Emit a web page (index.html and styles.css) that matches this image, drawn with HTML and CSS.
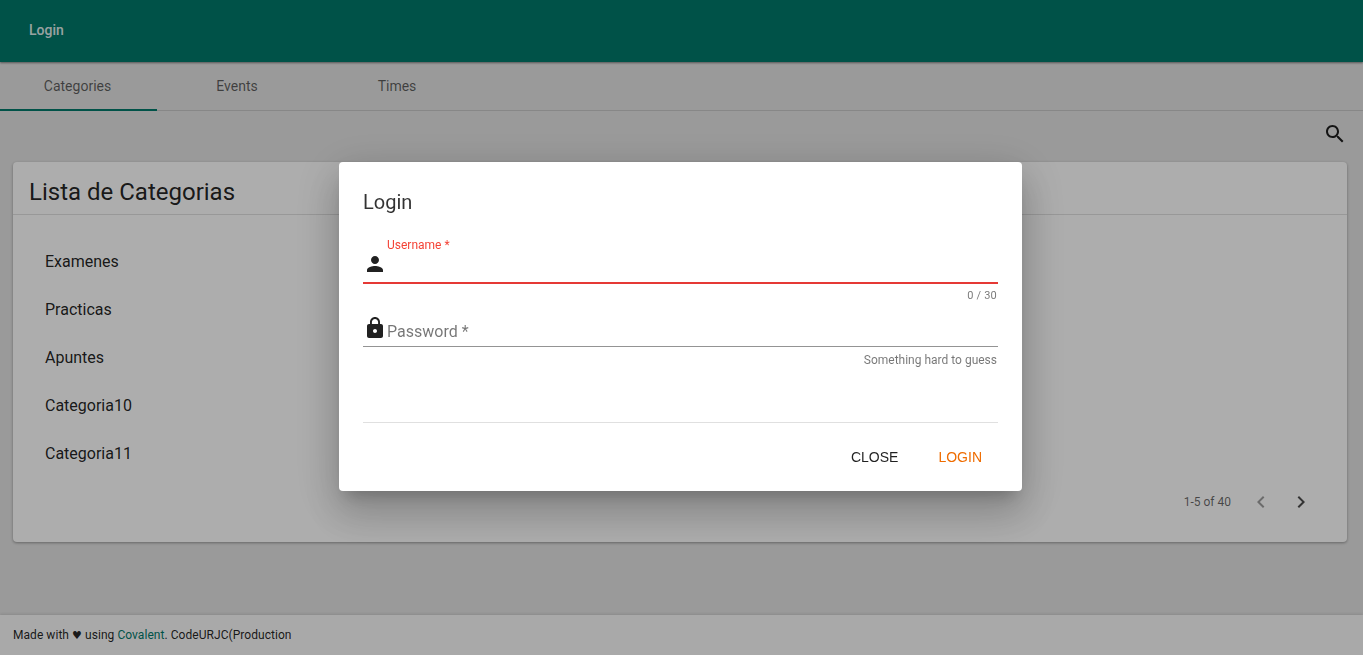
FILE: index.html
```html
<!DOCTYPE html>
<html lang="en">
<head>
    <meta charset="UTF-8">
    <meta name="viewport" content="width=device-width, initial-scale=1.0">
    <title>Login</title>
    <link rel="stylesheet" href="styles.css">
</head>
<body>
    <header class="toolbar">
        <span class="toolbar-link">Login</span>
    </header>

    <nav class="tabs">
        <div class="tab tab-active">Categories</div>
        <div class="tab">Events</div>
        <div class="tab">Times</div>
    </nav>

    <main class="content">
        <div class="search-row">
            <svg class="icon" viewBox="0 0 24 24"><path d="M15.5 14h-.79l-.28-.27C15.41 12.59 16 11.11 16 9.5 16 5.91 13.09 3 9.5 3S3 5.91 3 9.5 5.91 16 9.5 16c1.61 0 3.09-.59 4.23-1.57l.27.28v.79l5 4.99L20.49 19l-4.99-5zm-6 0C7.01 14 5 11.99 5 9.5S7.01 5 9.5 5 14 7.01 14 9.5 11.99 14 9.5 14z"/></svg>
        </div>
        <section class="card">
            <h2 class="card-title">Lista de Categorias</h2>
            <ul class="list">
                <li>Examenes</li>
                <li>Practicas</li>
                <li>Apuntes</li>
                <li>Categoria10</li>
                <li>Categoria11</li>
            </ul>
            <div class="paging">
                <span class="paging-range">1-5 of 40</span>
                <svg class="icon icon-disabled" viewBox="0 0 24 24"><path d="M15.41 7.41L14 6l-6 6 6 6 1.41-1.41L10.83 12z"/></svg>
                <svg class="icon icon-next" viewBox="0 0 24 24"><path d="M10 6L8.59 7.41 13.17 12l-4.58 4.59L10 18l6-6z"/></svg>
            </div>
        </section>
    </main>

    <footer class="footer">
        <span>Made with <span class="heart">&#9829;</span> using <span class="brand">Covalent</span>. CodeURJC(Production</span>
    </footer>

    <div class="overlay">
        <div class="dialog">
            <h3 class="dialog-title">Login</h3>

            <div class="field field-error">
                <label class="field-label">Username *</label>
                <div class="field-row">
                    <svg class="icon" viewBox="0 0 24 24"><path d="M12 12c2.21 0 4-1.79 4-4s-1.79-4-4-4-4 1.79-4 4 1.79 4 4 4zm0 2c-2.67 0-8 1.34-8 4v2h16v-2c0-2.66-5.33-4-8-4z"/></svg>
                </div>
                <div class="field-hint">0 / 30</div>
            </div>

            <div class="field field-password">
                <div class="field-row">
                    <svg class="icon" viewBox="0 0 24 24"><path d="M18 8h-1V6c0-2.76-2.24-5-5-5S7 3.24 7 6v2H6c-1.1 0-2 .9-2 2v10c0 1.1.9 2 2 2h12c1.1 0 2-.9 2-2V10c0-1.1-.9-2-2-2zm-6 9c-1.1 0-2-.9-2-2s.9-2 2-2 2 .9 2 2-.9 2-2 2zm3.1-9H8.9V6c0-1.71 1.39-3.1 3.1-3.1 1.71 0 3.1 1.39 3.1 3.1v2z"/></svg>
                    <span class="placeholder">Password *</span>
                </div>
                <div class="field-hint">Something hard to guess</div>
            </div>

            <div class="dialog-actions">
                <button class="btn">CLOSE</button>
                <button class="btn btn-accent">LOGIN</button>
            </div>
        </div>
    </div>
</body>
</html>
```

FILE: styles.css
```css
* {
    box-sizing: border-box;
}
body {
    margin: 0;
    height: 100vh;
    display: flex;
    flex-direction: column;
    font-family: Roboto, "Liberation Sans", sans-serif;
    color: rgba(0, 0, 0, 0.87);
    background-color: #e4e4e4;
    overflow: hidden;
}
.icon {
    display: block;
    width: 24px;
    height: 24px;
    flex: none;
    fill: rgba(0, 0, 0, 0.87);
}

.toolbar {
    height: 62px;
    flex: none;
    display: flex;
    align-items: center;
    padding: 0 0 2px 29px;
    background: #00796b;
    box-shadow: 0 1px 2px rgba(0, 0, 0, 0.45);
    position: relative;
    font-size: 14px;
    font-weight: 500;
    color: rgba(255, 255, 255, 0.9);
}

.tabs {
    height: 49px;
    flex: none;
    display: flex;
    border-bottom: 1px solid rgba(0, 0, 0, 0.12);
}
.tab {
    width: 160px;
    padding-bottom: 1px;
    display: flex;
    align-items: center;
    justify-content: center;
    font-size: 14px;
    color: rgba(0, 0, 0, 0.6);
}
.tab-active {
    width: 157px;
    padding: 0 2px 0 0;
    border-bottom: 2px solid #00796b;
    margin-bottom: -1px;
}

.content {
    flex: 1;
    padding: 0 16px 0 13px;
}
.search-row {
    height: 51px;
    display: flex;
    justify-content: flex-end;
    padding-top: 11px;
}
.card {
    height: 380px;
    background: white;
    border-radius: 4px;
    box-shadow: 0 1px 3px rgba(0, 0, 0, 0.35);
}
.card-title {
    margin: 0;
    height: 53px;
    padding-left: 16px;
    font-size: 24px;
    font-weight: 400;
    line-height: 60px;
    border-bottom: 1px solid rgba(0, 0, 0, 0.12);
}
.list {
    list-style: none;
    margin: 0;
    padding: 23px 0 0 32px;
}
.list li {
    height: 48px;
    line-height: 48px;
    font-size: 16px;
}
.paging {
    display: flex;
    align-items: center;
    height: 24px;
    margin-top: 12px;
    padding-right: 34px;
    justify-content: flex-end;
    gap: 16px;
}
.paging-range {
    font-size: 12px;
    color: rgba(0, 0, 0, 0.6);
    margin-right: 2px;
}
.icon-disabled {
    fill: rgba(0, 0, 0, 0.38);
}
.icon-next {
    fill: rgba(0, 0, 0, 0.7);
}

.footer {
    height: 40px;
    flex: none;
    display: flex;
    align-items: center;
    padding-left: 13px;
    background: #fafafa;
    box-shadow: 0 -1px 3px rgba(0, 0, 0, 0.12);
    font-size: 12px;
    letter-spacing: 0.05px;
}
.brand {
    color: #00796b;
}
.heart {
    font-family: "DejaVu Sans", sans-serif;
    font-size: 11px;
}

.overlay {
    position: fixed;
    top: 0;
    left: 0;
    right: 0;
    bottom: 0;
    display: flex;
    align-items: flex-start;
    justify-content: center;
    padding: 162px 2px 0 0;
    background: rgba(0, 0, 0, 0.32);
}
.dialog {
    width: 683px;
    height: 329px;
    padding: 24px;
    background: white;
    border-radius: 4px;
    box-shadow: 0 11px 15px -7px rgba(0, 0, 0, 0.2), 0 24px 38px 3px rgba(0, 0, 0, 0.14), 0 9px 46px 8px rgba(0, 0, 0, 0.12);
}
.dialog-title {
    margin: 0 0 20px 0;
    font-size: 20px;
    font-weight: 400;
    line-height: 32px;
    color: rgba(0, 0, 0, 0.8);
}
.field-label {
    display: block;
    height: 14px;
    line-height: 14px;
    padding-left: 24px;
    font-size: 12px;
    color: #f44336;
}
.field-row {
    display: flex;
    height: 32px;
    border-bottom: 1px solid rgba(0, 0, 0, 0.42);
}
.field-error .field-row {
    border-bottom: 2px solid #e53935;
}
.field-hint {
    margin-top: 5px;
    padding-right: 1px;
    height: 13px;
    line-height: 13px;
    text-align: right;
    font-size: 11px;
    letter-spacing: 0.2px;
    color: rgba(0, 0, 0, 0.54);
}
.field-password {
    margin-top: 13px;
}
.field-password .icon {
    margin-top: 1px;
}
.field-password .field-hint {
    margin-top: 7px;
    font-size: 12px;
    letter-spacing: 0;
}
.placeholder {
    padding-top: 7px;
    line-height: 19px;
    font-size: 16px;
    color: rgba(0, 0, 0, 0.54);
}
.dialog-actions {
    margin-top: 55px;
    padding-top: 16px;
    display: flex;
    justify-content: flex-end;
    gap: 8px;
    border-top: 1px solid rgba(0, 0, 0, 0.12);
}
.btn {
    height: 36px;
    padding: 0 16px;
    border: none;
    background: none;
    font-family: "Liberation Sans", Arial, sans-serif;
    font-size: 14px;
    color: rgba(0, 0, 0, 0.87);
}
.btn-accent {
    color: #ef6c00;
}
```
